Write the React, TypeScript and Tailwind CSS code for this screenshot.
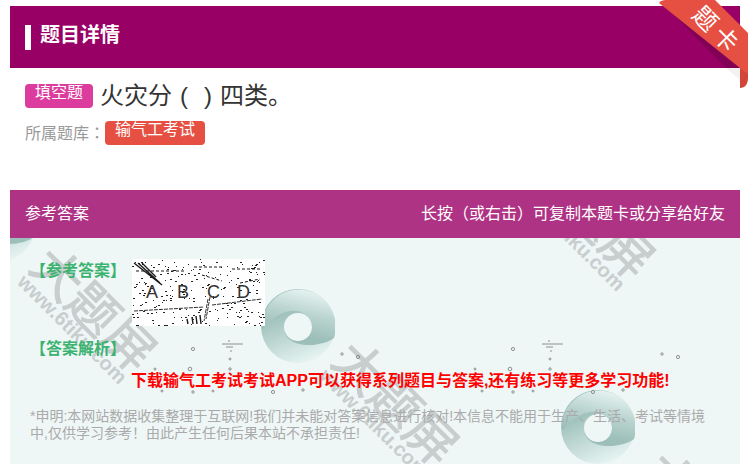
const speckPoints = [
  [43, 9, 1.6], [80, 19, 1], [5, 29, 1], [40, 29, 1.8], [80, 29, 1.2], [12, 51, 1], [43, 52, 1.2], [63, 51, 1],
  [123, 52, 1.6], [153, 50, 1.2], [192, 14, 1.2], [208, 17, 1.6],
];

// scratchy scan noise of the answer picture, fixed seed so it never changes
const noise: number[][] = [];
let seed = 17;
for (let i = 0; i < 230; i++) {
  seed = (seed * 137 + 59) % 7919;
  const x = seed % 133;
  seed = (seed * 137 + 59) % 7919;
  const y = seed % 67;
  seed = (seed * 137 + 59) % 7919;
  noise.push([x, y, 1 + (seed % 2)]);
}

function Watermark({ className }: { className: string }) {
  return (
    <div className={`absolute h-[80px] w-[220px] rotate-45 text-[#c8cdce] ${className}`}>
      <div className="text-[50px] leading-[56px] whitespace-nowrap [-webkit-text-stroke:1px_#c8cdce]">大题屏</div>
      <div className="-mt-[12px] pl-[2px] text-[20px] leading-[24px] font-bold whitespace-nowrap">www.6tiku.com</div>
    </div>
  );
}

function Swirl({ className }: { className: string }) {
  return (
    <svg viewBox="0 0 74 74" className={`absolute h-[74px] w-[74px] ${className}`}>
      <defs>
        <linearGradient id="swTop" x1="0.6" y1="0.85" x2="0.85" y2="0.05">
          <stop offset="0" stopColor="#9cbfb9" />
          <stop offset="0.45" stopColor="#b9d3ce" />
          <stop offset="1" stopColor="#e8f5f3" />
        </linearGradient>
        <linearGradient id="swBottom" x1="0.35" y1="0.3" x2="0.65" y2="1">
          <stop offset="0" stopColor="#9fc1bb" />
          <stop offset="1" stopColor="#e8f5f3" />
        </linearGradient>
      </defs>
      <path
        fillRule="evenodd"
        d="M37 0A37 37 0 1 1 37 74A37 37 0 1 1 37 0ZM37 24A14 14 0 1 0 37 52A14 14 0 1 0 37 24Z"
        fill="url(#swBottom)"
      />
      <path
        d="M1 41A37 37 0 1 1 73 49C62 58 23 62 23 38A14 14 0 0 0 51 38C51 22 26 10 1 41Z"
        fill="url(#swTop)"
      />
    </svg>
  );
}

function Specks({ className }: { className: string }) {
  return (
    <svg viewBox="0 0 220 60" className={`absolute h-[60px] w-[220px] ${className}`} fill="none" stroke="#777777" strokeWidth="0.8">
      <path d="M72 4h21M76 7h7M78 1h2M80 11h2" />
      {speckPoints.map(([x, y, r]) => (
        <circle key={`${x}-${y}`} cx={x} cy={y} r={r} />
      ))}
    </svg>
  );
}

function AnswerImage() {
  return (
    <div className="relative flex h-[67px] w-[133px] items-center bg-white pl-[14px] text-[18px] text-[#333333] font-['Liberation_Sans',sans-serif]">
      <svg viewBox="0 0 133 67" className="absolute inset-0 h-full w-full" fill="none" stroke="#1a1a1a">
        {noise.map(([x, y, w], i) => (
          <rect key={i} x={x} y={y} width={w} height="1" fill="#222222" stroke="none" />
        ))}
        <path d="M2 4L30 26M6 4L28 24M10 4L24 18" strokeWidth="1.4" />
        <path d="M4 12h50M62 8h30M100 10h28M70 16l20 6M108 24l20-4" strokeWidth="1" strokeDasharray="3 2" />
        <path d="M76 40L72 62M78 38L74 60M2 52L72 48M80 46L130 40" strokeWidth="0.9" strokeDasharray="4 1" />
        <path d="M60 58l1 7M64 57l1 8M68 56l1 9M55 60l1 5" strokeWidth="1.4" />
      </svg>
      <span className="relative w-[31px]">A</span>
      <span className="relative w-[30px]">B</span>
      <span className="relative w-[30px]">C</span>
      <span className="relative">D</span>
    </div>
  );
}

export default function App() {
  return (
    <div className="relative h-[464px] w-[750px] overflow-hidden bg-white font-['Liberation_Sans','Noto_Sans_CJK_SC',sans-serif]">
      <div className="px-[10px] pt-[6px]">
        <div className="flex h-[62px] w-[730px] items-center gap-[9px] bg-[#990066] pl-[15px]">
          <div className="h-[25px] w-[6px] bg-white" />
          <div className="pb-[4px] text-[20px] leading-[24px] font-bold text-white">题目详情</div>
        </div>

        <div className="mt-[16px] flex h-[24px] items-center gap-[7px] pl-[15px]">
          <span className="flex h-[24px] w-[68px] items-start justify-center rounded-[4px] bg-[#dc3c9d] text-[16px] leading-[18px] text-white">填空题</span>
          <span className="text-[24px] leading-[24px] whitespace-nowrap text-[#333333]">
            火灾分<span className="inline-block w-[24px] text-center">(</span>
            <span className="inline-block w-[24px] text-center">)</span>四类。
          </span>
        </div>

        <div className="mt-[13px] flex h-[24px] items-center pl-[15px]">
          <span className="w-[80px] text-[16px] leading-[24px] whitespace-nowrap text-[#999999]">
            所属题库<span className="font-['Noto_Sans_CJK_TC',sans-serif]">：</span>
          </span>
          <span className="flex h-[24px] w-[100px] items-start justify-center rounded-[4px] bg-[#e65043] text-[16px] leading-[18px] text-white">输气工考试</span>
        </div>

        <div className="mt-[45px] flex h-[48px] w-[730px] items-center justify-between bg-[#af3385] px-[15px] text-[16px] text-white">
          <span>参考答案</span>
          <span>长按（或右击）可复制本题卡或分享给好友</span>
        </div>

        <div className="relative h-[226px] w-[730px] overflow-hidden bg-[#eef7f6]">
          <Swirl className="left-[-49px] top-[-50px]" />
          <Swirl className="left-[251px] top-[51px]" />
          <Swirl className="left-[551px] top-[152px]" />
          <Watermark className="left-[-11px] top-[65px]" />
          <Watermark className="left-[487px] top-[-28px]" />
          <Watermark className="left-[291px] top-[159px]" />
          <Watermark className="left-[602px] top-[270px]" />
          <Specks className="left-[140px] top-[102px]" />
          <Specks className="left-[460px] top-[102px]" />

          <div className="relative pl-[20px] pt-[21px]">
            <div className="flex items-start gap-[6px]">
              <span className="text-[16px] leading-[24px] font-bold text-[#3cb371]">【参考答案】</span>
              <AnswerImage />
            </div>
            <div className="pt-[11px] text-[16px] leading-[24px] font-bold text-[#3cb371]">【答案解析】</div>
            <div className="pl-[101px] pt-[9px] text-[16px] leading-[22px] font-bold whitespace-nowrap text-[#ff0000]">
              下载输气工考试考试APP可以获得系列题目与答案,还有练习等更多学习功能!
            </div>
            <div className="w-[682px] pt-[16px] text-[14px] leading-[17px] text-[#aaaaaa]">
              *申明:本网站数据收集整理于互联网!我们并未能对答案信息进行核对!本信息不能用于生产、生活、考试等情境中,仅供学习参考！由此产生任何后果本站不承担责任!
            </div>
          </div>
        </div>
      </div>

      {/* corner ribbon */}
      <div className="absolute right-[2px] top-0 h-[90px] w-[92px] overflow-hidden">
        <svg viewBox="0 0 92 90" className="absolute inset-0 h-full w-full">
          <path d="M12 9L84 68H70Z" fill="#000000" fillOpacity="0.14" />
          <path d="M70 68H84V80Z" fill="#000000" fillOpacity="0.05" />
          <path d="M84 66V88C89 88 92 84 92 78V66Z" fill="#d2453a" />
          <path d="M3 3C5 0 8 0 12 0H59L92 33V74L84 68Z" fill="#e65043" />
        </svg>
        <div className="absolute left-[29px] top-[17px] w-[64px] rotate-45 text-center text-[24px] leading-[28px] tracking-[5px] whitespace-nowrap text-white">题卡</div>
      </div>
    </div>
  );
}
